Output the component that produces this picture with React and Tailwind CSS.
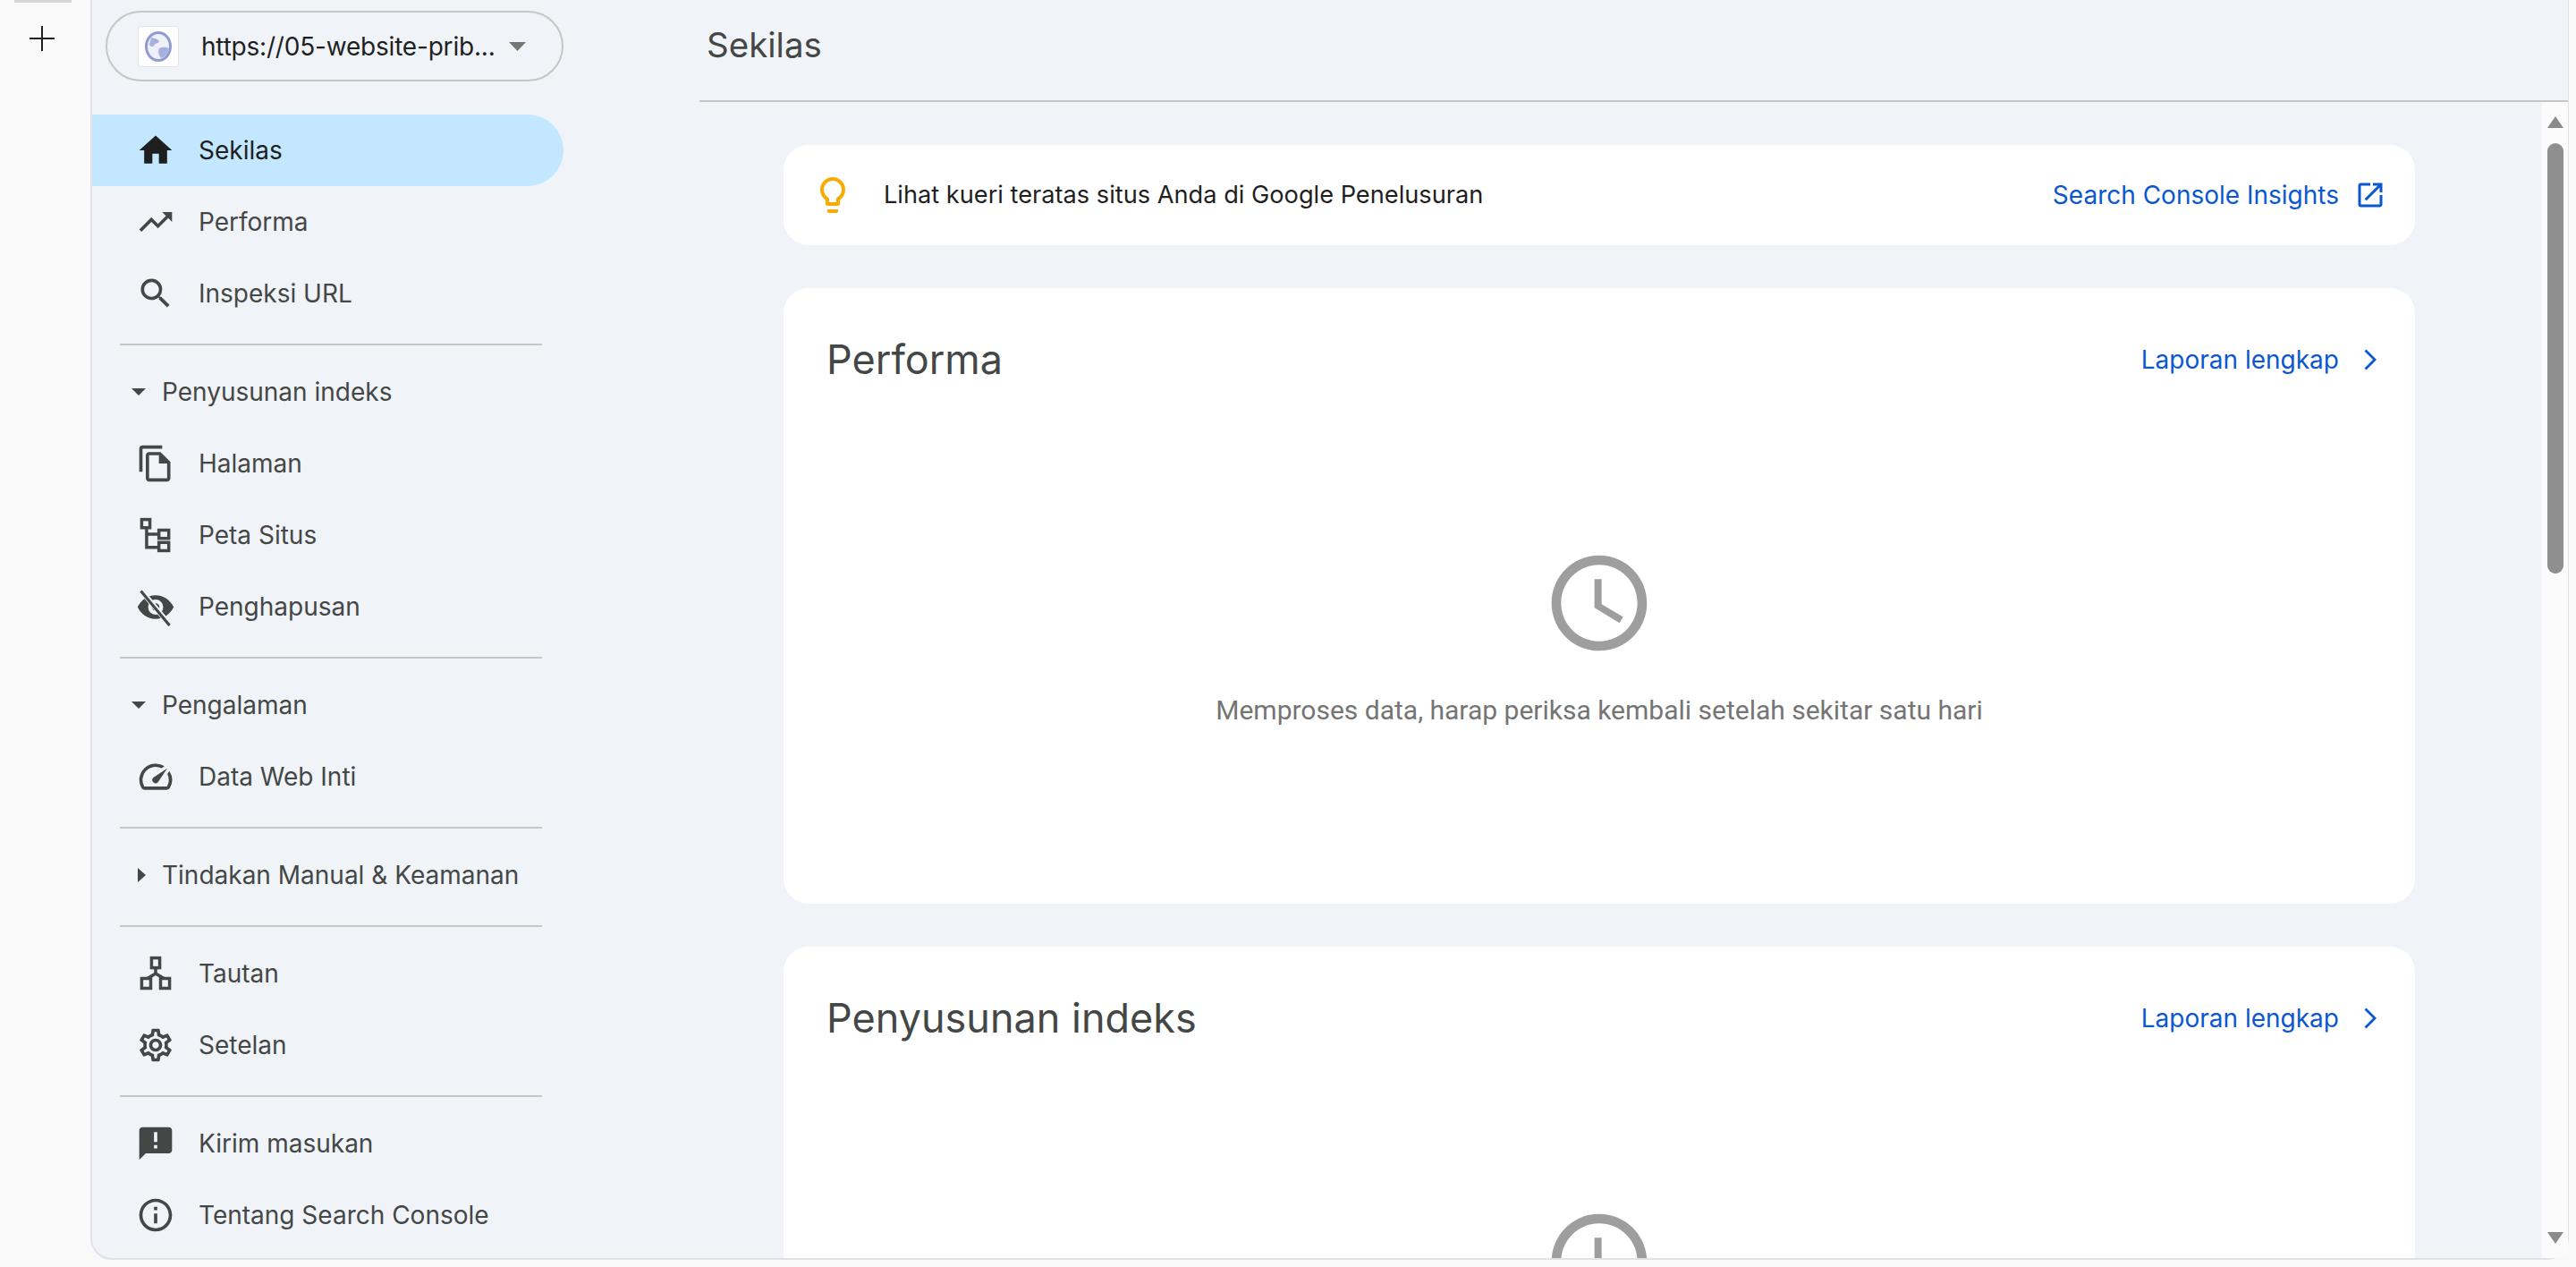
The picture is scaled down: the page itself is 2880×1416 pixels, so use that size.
import {
  MdHome,
  MdTrendingUp,
  MdSearch,
  MdOutlineFileCopy,
  MdOutlineSpeed,
  MdOutlineSettings,
  MdAnnouncement,
  MdInfoOutline,
  MdOpenInNew,
  MdAccessTime,
  MdLightbulbOutline,
} from 'react-icons/md'

const SitemapIcon = () => (
  <svg viewBox="0 0 24 24" width="44" height="44" fill="none" stroke="currentColor" strokeWidth="1.9">
    <rect x="3.500" y="2.500" width="5" height="5" />
    <rect x="14" y="9" width="6" height="5" />
    <rect x="14" y="16.500" width="6" height="5" />
    <path d="M6.500 7.500v12h7.500M6.500 11.500h7.500" />
  </svg>
)

const EyeOffIcon = () => (
  <svg viewBox="0 0 24 24" width="44" height="44">
    <path
      fill="currentColor"
      fillRule="evenodd"
      d="M12 5C7 5 3 8 1 12.2 3 16.600 7 19.500 12 19.500s9-2.900 11-7.300C21 8 17 5 12 5zm0 2.700a4.600 4.600 0 1 1 0 9.200 4.600 4.600 0 0 1 0-9.200z"
    />
    <circle cx="12" cy="12.200" r="2.300" fill="currentColor" />
    <path d="M3 2l17.500 21" stroke="#f0f4f9" strokeWidth="3.2" />
    <path d="M3 2.500l17.500 21" stroke="currentColor" strokeWidth="1.700" />
  </svg>
)

const LinksIcon = () => (
  <svg viewBox="0 0 24 24" width="44" height="44" fill="none" stroke="currentColor" strokeWidth="1.9">
    <rect x="9.500" y="2.500" width="5" height="6" />
    <rect x="3.500" y="15" width="5.500" height="6" />
    <rect x="15" y="15" width="5.500" height="6" />
    <path d="M12 8.500v3.500M12 12l-5 3M12 12l5 3" />
  </svg>
)

const GlobeIcon = () => (
  <svg viewBox="0 0 32 36" width="32" height="36">
    <ellipse cx="16" cy="18" rx="13.500" ry="15.500" fill="#eef0fa" stroke="#8f9bd2" strokeWidth="3" />
    <path d="M8 8c4 1 7 1 9 4-1 3-5 2-6 5-1 2-4 1-5-1zM17 20c4-2 8-1 11 0-1 6-5 10-9 11-2-3-4-7-2-11z" fill="#a6b0de" />
  </svg>
)

const Caret = ({ open = true }) =>
  open ? (
    <svg viewBox="0 0 16 8" width="16" height="8" className="block">
      <polygon points="0,0 16,0 8,8" fill="#444746" />
    </svg>
  ) : (
    <svg viewBox="0 0 9 16" width="9" height="16" className="block">
      <polygon points="0,0 9,8 0,16" fill="#444746" />
    </svg>
  )

const NavRow = ({ icon, label, active }) => (
  <div
    className={`flex h-[80px] w-[527px] items-center gap-[26px] rounded-r-[40px] pl-[49px] text-[28px] ${
      active ? 'bg-[#c2e7ff] text-[#1f1f1f]' : 'text-[#444746]'
    }`}
  >
    <span className="flex h-[44px] w-[44px] items-center justify-center">{icon}</span>
    <span>{label}</span>
  </div>
)

const SectionRow = ({ label, open }) => (
  <div className="flex h-[80px] items-center text-[28px] text-[#444746]">
    <span className="flex w-[78px] justify-end pr-[18px]">
      <Caret open={open} />
    </span>
    <span>{label}</span>
  </div>
)

const Divider = () => <div className="mb-[12px] ml-[31px] mt-[16px] h-[2px] w-[472px] bg-[#c4c7c5]" />

const ReportCard = ({ title }) => (
  <section className="h-[688px] shrink-0 rounded-[28px] bg-white">
    <div className="flex h-[160px] items-center justify-between pl-[48px] pr-[43px]">
      <h2 className="text-[45px] text-[#444746]">{title}</h2>
      <a className="flex items-center gap-[28px] text-[28px] text-[#0b57d0]">
        Laporan lengkap
        <svg viewBox="0 0 14 24" width="14" height="24" fill="none" stroke="currentColor" strokeWidth="2.800" className="block">
          <path d="M1.500 1.500 12 12 1.500 22.500" />
        </svg>
      </a>
    </div>
    <div className="flex flex-col items-center pt-[128px]">
      <MdAccessTime size={128} className="text-[#9e9e9e]" />
      <p className="mt-[33px] font-['Roboto',sans-serif] text-[30px] text-[#757575]">
        Memproses data, harap periksa kembali setelah sekitar satu hari
      </p>
    </div>
  </section>
)

export default function App() {
  return (
    <div className="flex h-screen overflow-hidden bg-[#f9f9f9] font-['Inter',sans-serif]">
      <div className="w-[101px] shrink-0">
        <div className="ml-[16px] h-[3px] w-[64px] bg-[#d5d6d7]" />
        <svg viewBox="0 0 28 28" width="28" height="28" className="ml-[33px] mt-[26px]" stroke="#1f1f1f" strokeWidth="2">
          <path d="M14 0v28M0 14h28" />
        </svg>
      </div>

      <div className="flex h-[1408px] w-[2771px] shrink-0 rounded-b-[24px] border-b-2 border-l-2 border-r border-[#e0e2e4] bg-[#f0f4f9]">
        <aside className="w-[679px] shrink-0">
          <div className="ml-[15px] mt-[12px] flex h-[79px] w-[512px] items-center rounded-[40px] border-2 border-[#c4c7c5] pl-[34px]">
            <span className="flex h-[46px] w-[46px] items-center justify-center rounded-[3px] border border-[#e3e5e8] bg-white">
              <GlobeIcon />
            </span>
            <span className="ml-[25px] w-[331px] whitespace-nowrap text-[28px] tracking-[-0.2px] text-[#1f1f1f]">https://05-website-prib...</span>
            <span className="ml-[13px]">
              <svg viewBox="0 0 19 10" width="19" height="10" className="block">
                <polygon points="0,0 19,0 9.500,10" fill="#757575" />
              </svg>
            </span>
          </div>

          <nav className="mt-[37px]">
            <NavRow active icon={<MdHome size={44} />} label="Sekilas" />
            <NavRow icon={<MdTrendingUp size={44} />} label="Performa" />
            <NavRow icon={<MdSearch size={44} />} label="Inspeksi URL" />
            <Divider />
            <SectionRow label="Penyusunan indeks" open />
            <NavRow icon={<MdOutlineFileCopy size={44} />} label="Halaman" />
            <NavRow icon={<SitemapIcon />} label="Peta Situs" />
            <NavRow icon={<EyeOffIcon />} label="Penghapusan" />
            <Divider />
            <SectionRow label="Pengalaman" open />
            <NavRow icon={<MdOutlineSpeed size={44} />} label="Data Web Inti" />
            <Divider />
            <SectionRow label="Tindakan Manual &amp; Keamanan" open={false} />
            <Divider />
            <NavRow icon={<LinksIcon />} label="Tautan" />
            <NavRow icon={<MdOutlineSettings size={44} />} label="Setelan" />
            <Divider />
            <NavRow icon={<MdAnnouncement size={44} />} label="Kirim masukan" />
            <NavRow icon={<MdInfoOutline size={44} />} label="Tentang Search Console" />
          </nav>
        </aside>

        <main className="flex min-w-0 flex-1 flex-col">
          <header className="flex h-[114px] shrink-0 items-center border-b-2 border-[#c4c7c5] pb-[10px] pl-[8px] text-[38.500px] text-[#444746]">
            Sekilas
          </header>
          <div className="flex min-h-0 flex-1">
            <div className="flex min-w-0 flex-1 flex-col gap-[48px] overflow-hidden pl-[94px] pr-[142px] pt-[48px]">
              <div className="flex h-[112px] shrink-0 items-center justify-between rounded-[28px] bg-white pl-[31px] pr-[32px]">
                <div className="flex items-center gap-[33px] text-[27.200px] text-[#1f1f1f]">
                  <MdLightbulbOutline size={48} className="text-[#f9ab00]" />
                  Lihat kueri teratas situs Anda di Google Penelusuran
                </div>
                <a className="flex items-center gap-[17px] text-[28px] text-[#0b57d0]">
                  Search Console Insights
                  <MdOpenInNew size={36} />
                </a>
              </div>
              <ReportCard title="Performa" />
              <ReportCard title="Penyusunan indeks" />
            </div>
            <div className="flex w-[29px] shrink-0 flex-col items-center justify-between bg-[#fbfbfb] pb-[16px] pt-[16px]">
              <div className="flex flex-col items-center">
                <svg viewBox="0 0 18 13" width="18" height="13" className="block">
                  <polygon points="9,0 18,13 0,13" fill="#8a8a8a" />
                </svg>
                <div className="mt-[17px] h-[481px] w-[18px] rounded-full bg-[#8f8f8f]" />
              </div>
              <svg viewBox="0 0 18 13" width="18" height="13" className="block">
                <polygon points="0,0 18,0 9,13" fill="#8a8a8a" />
              </svg>
            </div>
          </div>
        </main>
      </div>
    </div>
  )
}
